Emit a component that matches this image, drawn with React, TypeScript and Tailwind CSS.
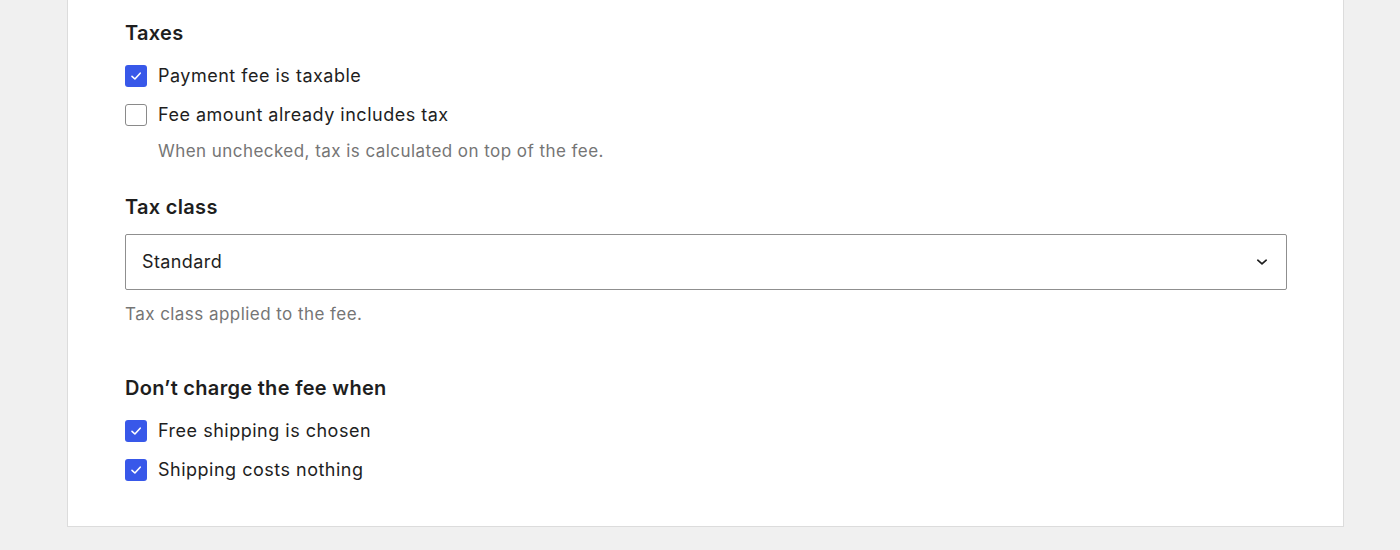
import React from "react";

function Check({ checked }: { checked: boolean }) {
  return checked ? (
    <span className="flex h-[22px] w-[22px] shrink-0 items-center justify-center rounded-[3px] bg-[#3858e9]">
      <svg width="16" height="16" viewBox="0 0 16 16" fill="none">
        <path d="M4 8.4 L6.9 11 L12.2 5.2" stroke="white" strokeWidth="1.6" strokeLinecap="round" strokeLinejoin="round" />
      </svg>
    </span>
  ) : (
    <span className="h-[22px] w-[22px] shrink-0 rounded-[3px] border border-[#8a8a8a] bg-white" />
  );
}

function Row({ checked, label, className = "" }: { checked: boolean; label: string; className?: string }) {
  return (
    <label className={`flex h-[32px] items-center gap-[11px] ${className}`}>
      <Check checked={checked} />
      <span className="text-[18px] leading-[24px] tracking-[0.5px] text-[#1e1e1e]">{label}</span>
    </label>
  );
}

export default function App() {
  return (
    <div className="min-h-[550px] bg-[#f0f0f0] pl-[67px] pr-[56px] pb-[23px]" style={{ fontFamily: "Inter, 'Noto Sans', sans-serif" }}>
      <div className="border-x border-b border-[#dcdcdc] bg-white pl-[57px] pr-[56px] pt-[19px] pb-[40px]">
        <h2 className="text-[20px] font-semibold leading-[28px] tracking-[0.3px] text-[#1e1e1e]">Taxes</h2>
        <Row checked label="Payment fee is taxable" className="mt-[13px]" />
        <Row checked={false} label="Fee amount already includes tax" className="mt-[7px]" />
        <p className="mt-[8px] pl-[33px] text-[17px] leading-[24px] tracking-[0.45px] text-[#757575]">
          When unchecked, tax is calculated on top of the fee.
        </p>

        <h2 className="mt-[30px] text-[20px] font-semibold leading-[28px] tracking-[0.3px] text-[#1e1e1e]">Tax class</h2>
        <div className="mt-[13px] flex h-[56px] items-center justify-between rounded-[2px] border border-[#8f8f8f] pl-[16px] pr-[17px]">
          <span className="text-[18px] leading-[24px] tracking-[0.4px] text-[#1e1e1e]">Standard</span>
          <svg width="14" height="14" viewBox="0 0 14 14" fill="none">
            <path d="M2.8 5.2 L7 8.8 L11.2 5.2" stroke="#1e1e1e" strokeWidth="1.7" strokeLinecap="round" strokeLinejoin="round" />
          </svg>
        </div>
        <p className="mt-[12px] text-[17px] leading-[24px] tracking-[0.45px] text-[#757575]">Tax class applied to the fee.</p>

        <h2 className="mt-[48px] text-[20px] font-semibold leading-[28px] tracking-[0.3px] text-[#1e1e1e]">Don’t charge the fee when</h2>
        <Row checked label="Free shipping is chosen" className="mt-[13px]" />
        <Row checked label="Shipping costs nothing" className="mt-[7px]" />
      </div>
    </div>
  );
}
